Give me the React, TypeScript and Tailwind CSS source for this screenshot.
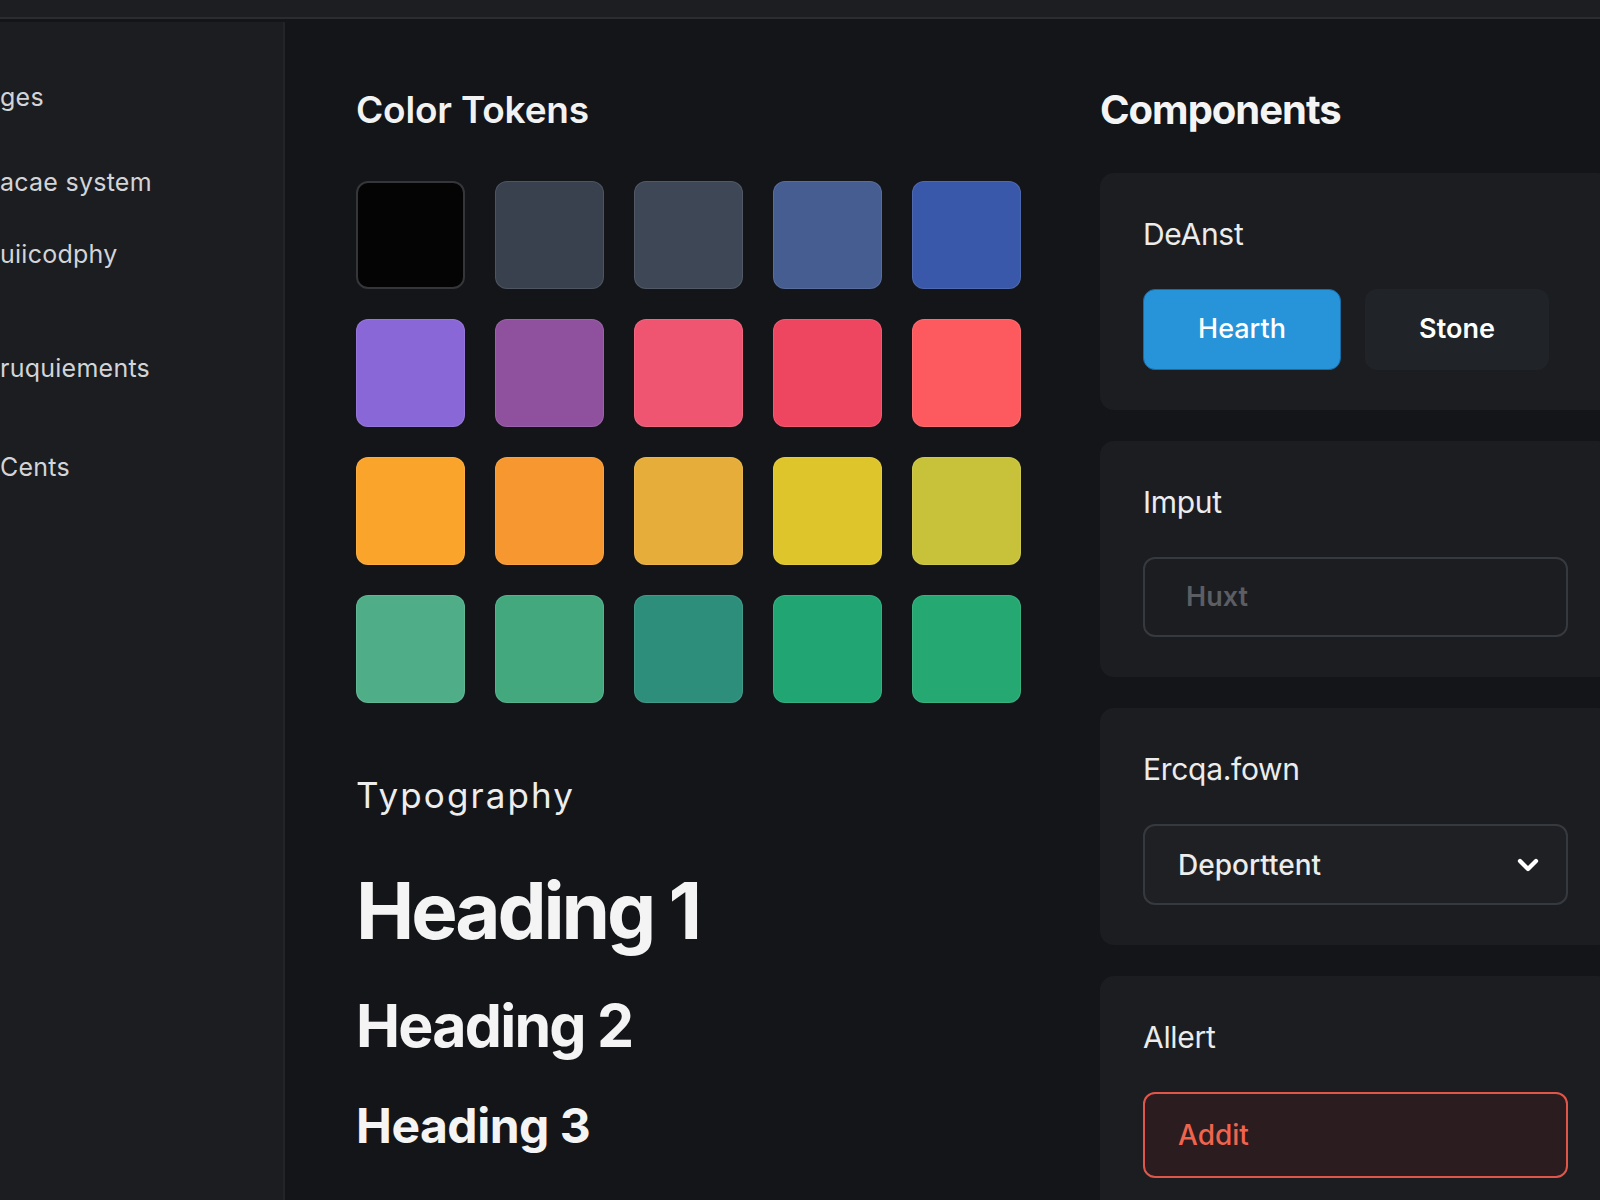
import { ChevronDown } from 'lucide-react';

const swatches = [
  ['#040405', '#3a414e', '#3e4756', '#455d90', '#3a58a9'],
  ['#8a67d6', '#8f509e', '#ef5470', '#ee4661', '#fc5a5e'],
  ['#fba42c', '#f6972f', '#e6ad3b', '#dfc52c', '#c8c23a'],
  ['#4fae88', '#44a87f', '#2d8e7b', '#21a573', '#25a871'],
];

const navItems = [
  { label: 'ges', mt: 'mt-0' },
  { label: 'acae system', mt: 'mt-[60px]' },
  { label: 'uiicodphy', mt: 'mt-[47px]' },
  { label: 'ruquiements', mt: 'mt-[89px]' },
  { label: 'Cents', mt: 'mt-[74px]' },
];

function Sidebar() {
  return (
    <aside className="w-[285px] shrink-0 mt-[3px] h-[1180px] bg-[#1b1d21] border-r-2 border-[#222428] pt-[63px] overflow-hidden">
      {navItems.map((item) => (
        <div
          key={item.label}
          className={`${item.mt} text-[25px] leading-none tracking-[0.01em] text-[#d2d4d7] whitespace-nowrap`}
        >
          {item.label}
        </div>
      ))}
    </aside>
  );
}

function ColorTokens() {
  return (
    <section className="w-[815px] shrink-0 pl-[71px] pt-[71px]">
      <h2 className="text-[37px] leading-[40px] font-semibold tracking-[-0.005em] text-[#f2f2f2]">
        Color Tokens
      </h2>

      <div className="mt-[51px] grid grid-cols-[repeat(5,109px)] gap-x-[30px] gap-y-[30px]">
        {swatches.flat().map((color, i) => (
          <div
            key={i}
            className={
              i === 0
                ? 'h-[108px] rounded-[12px] border-2 border-[#34363a]'
                : 'h-[108px] rounded-[12px] border border-white/10'
            }
            style={{ backgroundColor: color }}
          />
        ))}
      </div>

      {/* Typography scale */}
      <div className="mt-[75px] text-[35px] leading-[34px] tracking-[0.06em] text-[#ededed]">Typography</div>
      <div className="mt-[60px] text-[78px] leading-none font-bold tracking-[-0.04em] text-[#f4f4f4]">
        Heading 1
      </div>
      <div className="mt-[46px] text-[59px] leading-none font-bold tracking-[-0.03em] text-[#f4f4f4]">
        Heading 2
      </div>
      <div className="mt-[47px] text-[48px] leading-none font-bold tracking-[-0.01em] text-[#f4f4f4]">
        Heading 3
      </div>
    </section>
  );
}

function Card({ title, children }: { title: string; children: React.ReactNode }) {
  return (
    <div className="rounded-[14px] bg-[#1b1d21] pl-[43px] pr-[43px] pt-[46px] pb-[40px]">
      <div className="text-[30px] leading-none text-[#ececec] tracking-[-0.01em]">{title}</div>
      <div className="mt-[40px]">{children}</div>
    </div>
  );
}

function Components() {
  return (
    <section className="w-[511px] shrink-0 pt-[71px]">
      <h2 className="text-[40px] leading-[40px] font-bold tracking-[-0.025em] text-[#f4f4f4]">
        Components
      </h2>

      <div className="mt-[43px] flex flex-col gap-[31px]">
        <Card title="DeAnst">
          <div className="flex gap-[24px]">
            <button className="w-[198px] h-[81px] rounded-[12px] bg-[#2793d8] border border-[#1a6aa3] text-white text-[27px] font-medium">
              Hearth
            </button>
            <button className="w-[184px] h-[81px] rounded-[12px] bg-[#202327] text-white text-[27px] font-semibold">
              Stone
            </button>
          </div>
        </Card>

        <Card title="Imput">
          <div className="h-[80px] rounded-[12px] border-2 border-[#36393e] bg-[#1b1d21] flex items-center pl-[41px] text-[27px] font-semibold text-[#5b5e63]">
            Huxt
          </div>
        </Card>

        <Card title="Ercqa.fown">
          <div className="h-[81px] rounded-[12px] border-2 border-[#36393e] bg-[#1e2024] flex items-center justify-between pl-[33px] pr-[22px] text-[28px] font-medium text-[#ececec]">
            <span>Deporttent</span>
            <ChevronDown size={32} strokeWidth={3.2} className="text-white" />
          </div>
        </Card>

        <Card title="Allert">
          <div className="h-[86px] rounded-[12px] border-2 border-[#e0574a] bg-[#2b1c1f] flex items-center pl-[33px] text-[28px] font-medium text-[#f0644e]">
            Addit
          </div>
        </Card>
      </div>
    </section>
  );
}

export default function App() {
  return (
    <div className="w-[1600px] h-[1200px] overflow-hidden bg-[#131519] font-['Inter',sans-serif]">
      {/* top bar */}
      <div className="h-[19px] bg-[#1c1e22] border-b-2 border-[#2a2c30]" />
      <div className="flex">
        <Sidebar />
        <ColorTokens />
        <Components />
      </div>
    </div>
  );
}
